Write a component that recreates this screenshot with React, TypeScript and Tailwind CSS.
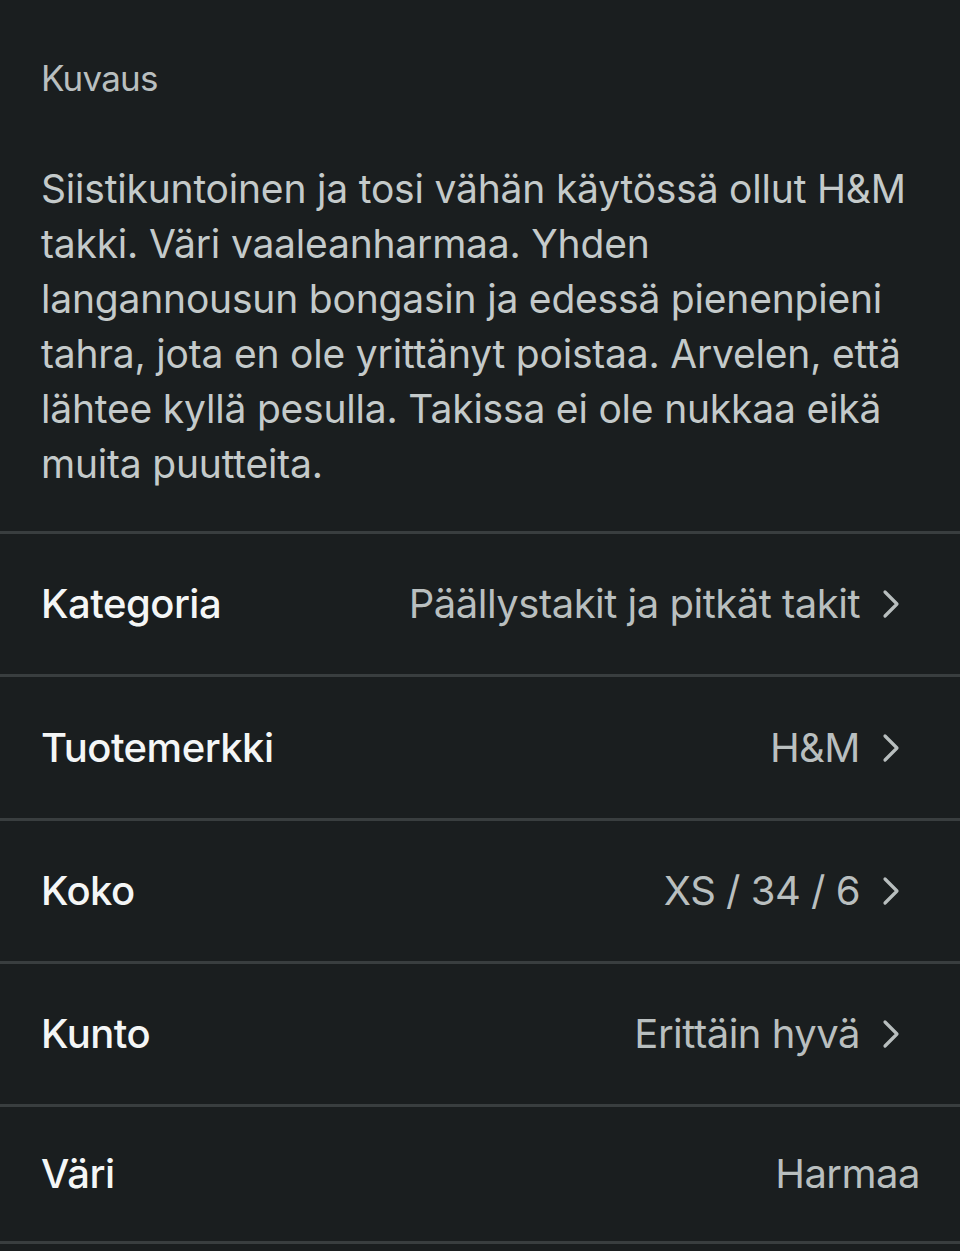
import React from "react";

const Chevron = () => (
  <svg width="22" height="34" viewBox="0 0 22 34" fill="none" className="ml-5 shrink-0">
    <path d="M5 5 L17 17 L5 29" stroke="#b8bebe" strokeWidth="3.2" strokeLinecap="round" strokeLinejoin="round" />
  </svg>
);

const rows: { label: string; value: string; chevron: boolean; h: string }[] = [
  { label: "Kategoria", value: "Päällystakit ja pitkät takit", chevron: true, h: "h-[143px]" },
  { label: "Tuotemerkki", value: "H&M", chevron: true, h: "h-[144px]" },
  { label: "Koko", value: "XS / 34 / 6", chevron: true, h: "h-[143px]" },
  { label: "Kunto", value: "Erittäin hyvä", chevron: true, h: "h-[143px]" },
  { label: "Väri", value: "Harmaa", chevron: false, h: "h-[137px]" },
];

export default function App() {
  return (
    <div className="w-[960px] h-[1251px] overflow-hidden bg-[#1a1e1f] font-['Inter',sans-serif]">
      <div className="px-[41px] pt-[58px]">
        <div className="text-[35px] leading-[40px] text-[#b9bfbf] tracking-[-0.8px]">Kuvaus</div>
        <div className="mt-[63px] text-[39px] leading-[55px] text-[#c4caca] tracking-[-0.2px]">
          Siistikuntoinen ja tosi vähän käytössä ollut H&amp;M
          <br />
          takki. Väri vaaleanharmaa. Yhden
          <br />
          langannousun bongasin ja edessä pienenpieni
          <br />
          tahra, jota en ole yrittänyt poistaa. Arvelen, että
          <br />
          lähtee kyllä pesulla. Takissa ei ole nukkaa eikä
          <br />
          muita puutteita.
        </div>
      </div>
      <div className="mt-[40px] border-t-[3px] border-[#393e3f]">
        {rows.map((r) => (
          <div
            key={r.label}
            className={`${r.h} border-b-[3px] border-[#393e3f] flex items-center justify-between pl-[41px] pr-[58px]`}
          >
            <span className="text-[40px] font-medium text-[#f4f6f6] tracking-[-0.5px]">{r.label}</span>
            <span className={`flex items-center ${r.chevron ? "" : "-mr-[18px]"}`}>
              <span className="text-[40px] text-[#b9bfbf] tracking-[-0.5px]">{r.value}</span>
              {r.chevron && <Chevron />}
            </span>
          </div>
        ))}
      </div>
    </div>
  );
}
